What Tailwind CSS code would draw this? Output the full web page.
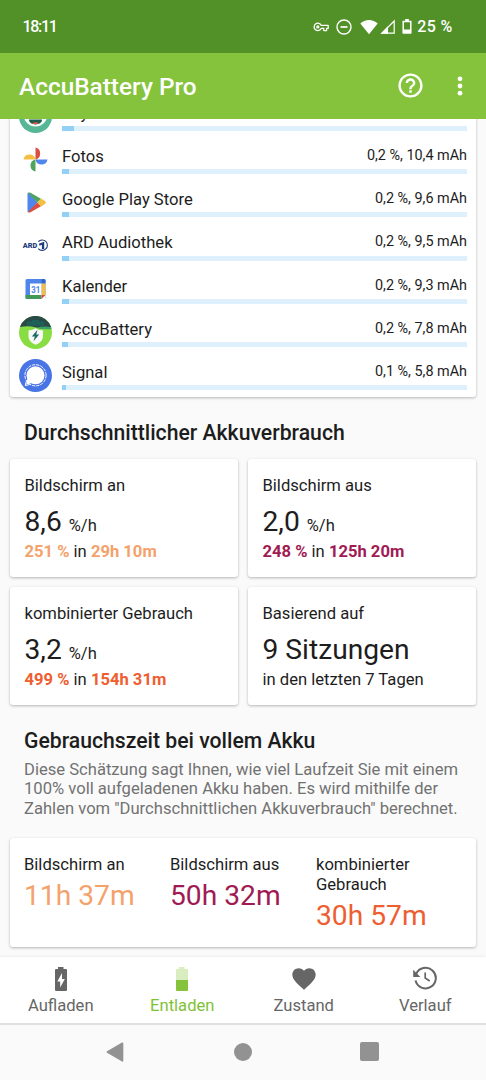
<!DOCTYPE html>
<html lang="de">
<head>
  <meta charset="UTF-8" />
  <meta name="viewport" content="width=device-width, initial-scale=1.0" />
  <title>AccuBattery Pro</title>
  <script src="https://cdn.jsdelivr.net/npm/@tailwindcss/browser@4"></script>
</head>
<body class="w-[486px] h-[1080px] overflow-hidden flex flex-col bg-[#fafafa] text-[#1d1d1d] font-['Roboto',sans-serif] text-[16.6px] leading-[19.4px]">

  <!-- Status bar -->
  <div class="h-[53px] shrink-0 bg-[#529028] text-white flex items-center justify-between pl-[22.5px] pr-[33.5px] text-[16px] font-medium">
    <span class="tracking-[-1.3px] pt-px">18:11</span>
    <div class="flex items-center">
      <svg class="w-4 h-3 mr-[7px]" viewBox="0 0 16 12" fill="none" stroke="#fff" stroke-width="1.3">
        <path d="M8.2 4.4H15.2V7.4H13.6V9.6H10.8V7.4H8.2A3.7 3.7 0 1 1 8.2 4.4Z" stroke-linejoin="round" />
        <circle cx="4.8" cy="5.9" r="1" />
      </svg>
      <svg class="w-4 h-4 mr-2" viewBox="0 0 16 16" fill="none" stroke="#fff" stroke-width="1.4">
        <circle cx="8" cy="8" r="7" /><path d="M4.5 8h7" stroke-width="1.7" />
      </svg>
      <svg class="w-[18px] h-4 mr-[2px]" viewBox="0 0 18 16" fill="#fff">
        <path d="M9 15.2L.3 4.5C2.8 2.3 5.7 1 9 1s6.2 1.3 8.7 3.5Z" />
      </svg>
      <svg class="w-[15px] h-[15px] mr-[7px]" viewBox="0 0 15 15">
        <path d="M2 14.2H14.2V2Z" fill="none" stroke="#fff" stroke-width="1.2" />
        <path d="M.5 14.8L8 7.3V14.8Z" fill="#fff" />
      </svg>
      <svg class="w-[10px] h-[15px] mr-[5px]" viewBox="0 0 10 15">
        <path d="M1.2 2.4H8.8V13.8H1.2Z" fill="none" stroke="#fff" stroke-width="1.5" />
        <path d="M3.2 0H6.8V2H3.2ZM1 10.5H9V14.5H1Z" fill="#fff" />
      </svg>
      <span class="tracking-[0.3px] pt-px">25 %</span>
    </div>
  </div>

  <!-- App bar -->
  <header class="h-[66px] shrink-0 bg-[#85c33d] text-white flex items-center pl-[19px] pr-[23px]">
    <h1 class="flex-1 text-[24.4px] leading-7 font-medium pt-[2px]">AccuBattery Pro</h1>
    <svg class="w-[29px] h-[29px] mr-[32px] -mt-px" viewBox="0 0 24 24" fill="#fff">
      <path d="M11 18h2v-2h-2v2zm1-16C6.48 2 2 6.48 2 12s4.48 10 10 10 10-4.48 10-10S17.52 2 12 2zm0 18c-4.41 0-8-3.59-8-8s3.59-8 8-8 8 3.59 8 8-3.59 8-8 8zm0-14c-2.21 0-4 1.79-4 4h2c0-1.1.9-2 2-2s2 .9 2 2c0 2-3 1.75-3 5h2c0-2.25 3-2.5 3-5 0-2.21-1.79-4-4-4z" />
    </svg>
    <svg class="w-[6px] h-5" viewBox="0 0 6 20" fill="#fff">
      <circle cx="3" cy="2.8" r="2.4" /><circle cx="3" cy="10" r="2.4" /><circle cx="3" cy="17.2" r="2.4" />
    </svg>
  </header>

  <main class="h-[837.5px] shrink-0 overflow-hidden px-[10px]">
    <!-- App usage list, scrolled under the app bar -->
    <ul class="-mt-[31px] h-[309px] bg-white rounded-[3px] shadow-[0_1px_3px_rgba(0,0,0,0.28)] px-[9px]">
      <li class="flex h-[43.15px]">
        <svg class="w-[33px] h-[33px] shrink-0 mt-3" viewBox="0 0 33 33">
          <circle cx="16.5" cy="16.5" r="16.5" fill="#56b696" />
          <circle cx="16.5" cy="14.5" r="12" fill="#f4fbf8" />
          <path d="M10 19.5H23C23 26 10 26 10 19.5Z" fill="#1f5a4c" />
          <path d="M13 23.2Q16.5 21.5 20 23.2Q16.5 25.5 13 23.2Z" fill="#e0574f" />
        </svg>
        <div class="ml-[10px] flex-1 flex flex-col">
          <div class="flex-1 pt-[16px]">Joy</div>
          <div class="h-[5px] bg-[#def0fc]"><div class="h-full w-[12px] bg-[#92d0f6]"></div></div>
        </div>
      </li>
      <li class="flex h-[43.15px]">
        <svg class="w-[33px] h-[33px] shrink-0 mt-3" viewBox="0 0 33 33">
          <path d="M16.5 16.5V4.5A6.2 6.2 0 0 1 16.5 16.5Z" fill="#db4d40" />
          <path d="M16.5 16.5H28.5A6.1 6.1 0 0 1 16.5 16.5Z" fill="#5086ec" />
          <path d="M16.5 16.5V28.5A6.1 6.1 0 0 1 16.5 16.5Z" fill="#4ea45b" />
          <path d="M16.5 16.5H4.5A6.1 6.1 0 0 1 16.5 16.5Z" fill="#f3bf42" />
        </svg>
        <div class="ml-[10px] flex-1 flex flex-col">
          <div class="flex-1 flex justify-between pt-[16px]"><span>Fotos</span><span class="text-[14.4px] leading-[17px]">0,2 %, 10,4 mAh</span></div>
          <div class="h-[5px] bg-[#def0fc]"><div class="h-full w-[7px] bg-[#92d0f6]"></div></div>
        </div>
      </li>
      <li class="flex h-[43.15px]">
        <svg class="w-[33px] h-[33px] shrink-0 mt-3" viewBox="0 0 33 33">
          <path d="M8.5 7.5Q8.5 6.5 10 6.8L18.5 16.5L10 26.2Q8.5 26.5 8.5 25.5Z" fill="#4f86ec" />
          <path d="M9 7Q10 6 11.5 6.8L22 12.7L18.3 16.5Z" fill="#4ea45b" />
          <path d="M9 26Q10 27 11.5 26.2L22 20.3L18.3 16.5Z" fill="#db4d40" />
          <path d="M22 12.6L26 15Q27.8 16.5 26 18L22 20.4L18.3 16.5Z" fill="#f3bf42" />
        </svg>
        <div class="ml-[10px] flex-1 flex flex-col">
          <div class="flex-1 flex justify-between pt-[16px]"><span>Google Play Store</span><span class="text-[14.4px] leading-[17px]">0,2 %, 9,6 mAh</span></div>
          <div class="h-[5px] bg-[#def0fc]"><div class="h-full w-[6.5px] bg-[#92d0f6]"></div></div>
        </div>
      </li>
      <li class="flex h-[43.15px]">
        <svg class="w-[33px] h-[33px] shrink-0 mt-3" viewBox="0 0 33 33">
          <text x="3.8" y="19.2" font-family="Roboto, sans-serif" font-size="7.5" font-weight="900" textLength="14.5" lengthAdjust="spacingAndGlyphs" fill="#1d3c7c">ARD</text>
          <path d="M19.3 12.7A5.2 5.2 0 1 1 19.3 19.6" fill="none" stroke="#1d3c7c" stroke-width="1.1" />
          <path d="M19.8 14.8L25.2 12.8V20H22.9V15.8L20.6 16.7Z" fill="#1d3c7c" />
        </svg>
        <div class="ml-[10px] flex-1 flex flex-col">
          <div class="flex-1 flex justify-between pt-[16px]"><span>ARD Audiothek</span><span class="text-[14.4px] leading-[17px]">0,2 %, 9,5 mAh</span></div>
          <div class="h-[5px] bg-[#def0fc]"><div class="h-full w-[6.5px] bg-[#92d0f6]"></div></div>
        </div>
      </li>
      <li class="flex h-[43.15px]">
        <svg class="w-[33px] h-[33px] shrink-0 mt-3" viewBox="0 0 33 33">
          <rect x="6.5" y="6" width="20" height="20" rx="1.5" fill="#4f86ec" />
          <path d="M22.5 6H25Q26.5 6 26.5 7.5V10.500H22.5Z" fill="#2f66cf" />
          <path d="M22.5 10.5H26.5V22H22.5Z" fill="#f3bf42" />
          <path d="M6.5 22H22.5V26H8Q6.5 26 6.5 24.5Z" fill="#43985a" />
          <path d="M22.5 22H26.5V26H22.5Z" fill="#fff" />
          <path d="M22.5 22H26.5L22.5 26Z" fill="#db4d40" />
          <rect x="11" y="10.5" width="11.5" height="11.5" fill="#fff" />
          <text x="16.8" y="19.6" text-anchor="middle" font-family="Roboto, sans-serif" font-size="9" font-weight="700" textLength="9" lengthAdjust="spacingAndGlyphs" fill="#4f86ec">31</text>
        </svg>
        <div class="ml-[10px] flex-1 flex flex-col">
          <div class="flex-1 flex justify-between pt-[16px]"><span>Kalender</span><span class="text-[14.4px] leading-[17px]">0,2 %, 9,3 mAh</span></div>
          <div class="h-[5px] bg-[#def0fc]"><div class="h-full w-[6.5px] bg-[#92d0f6]"></div></div>
        </div>
      </li>
      <li class="flex h-[43.15px]">
        <svg class="w-[33px] h-[33px] shrink-0 mt-3" viewBox="0 0 33 33">
          <circle cx="16.5" cy="16.5" r="16.5" fill="#88dd42" />
          <path d="M.9 11A16.5 16.5 0 0 1 32.1 11Q24 13.5 17 11.5T.9 11Z" fill="#2a4a4a" />
          <path d="M13 4H20V5.5H25V9.500H8V5.5H13Z" fill="#1c6058" />
          <path d="M17 11.7Q26 9.5 32.2 11.3L32.6 13Q25 14 17 11.7Z" fill="#3aa06a" />
          <path d="M9.5 14.5Q14 14 16.5 12.2Q19 14 24 14.5V20Q24 26 16.7 28.8Q9.5 26 9.5 20Z" fill="#f7f9f8" />
          <path d="M18.5 13.8L12.8 20.5H15.8L14.5 25.3L20.2 18.5H17.3Z" fill="#1f6b62" />
        </svg>
        <div class="ml-[10px] flex-1 flex flex-col">
          <div class="flex-1 flex justify-between pt-[16px]"><span>AccuBattery</span><span class="text-[14.4px] leading-[17px]">0,2 %, 7,8 mAh</span></div>
          <div class="h-[5px] bg-[#def0fc]"><div class="h-full w-[5.5px] bg-[#92d0f6]"></div></div>
        </div>
      </li>
      <li class="flex h-[43.15px]">
        <svg class="w-[33px] h-[33px] shrink-0 mt-3" viewBox="0 0 33 33">
          <circle cx="16.5" cy="16.5" r="16.5" fill="#4974e6" />
          <circle cx="16.5" cy="16.3" r="9" fill="#fff" />
          <path d="M8.5 19.5L7.3 25.5L13 24Z" fill="#fff" />
          <circle cx="16.5" cy="16.3" r="10.6" fill="none" stroke="#fff" stroke-width="1" stroke-dasharray="3.2 1" />
          <path d="M7.3 22.2L6.3 26.6L10.7 25.5" fill="none" stroke="#fff" stroke-width="1" />
        </svg>
        <div class="ml-[10px] flex-1 flex flex-col">
          <div class="flex-1 flex justify-between pt-[16px]"><span>Signal</span><span class="text-[14.4px] leading-[17px]">0,1 %, 5,8 mAh</span></div>
          <div class="h-[5px] bg-[#def0fc]"><div class="h-full w-[4px] bg-[#92d0f6]"></div></div>
        </div>
      </li>
    </ul>

    <!-- Average usage -->
    <h2 class="mt-[22.5px] ml-[14px] text-[21.2px] leading-[25px] font-medium">Durchschnittlicher Akkuverbrauch</h2>
    <div class="mt-[14.5px] grid grid-cols-2 gap-[10px]">
      <section class="h-[118px] bg-white rounded-[3px] shadow-[0_1px_3px_rgba(0,0,0,0.28)] px-[14.5px] pt-[17px]">
        <p>Bildschirm an</p>
        <p class="mt-[10px] text-[28.2px] leading-[34px]">8,6 <span class="text-[16.5px] leading-none">%/h</span></p>
        <p class="mt-[3px]"><b class="font-bold text-[#f4a26c]">251 %</b> in <b class="font-bold text-[#f4a26c]">29h 10m</b></p>
      </section>
      <section class="h-[118px] bg-white rounded-[3px] shadow-[0_1px_3px_rgba(0,0,0,0.28)] px-[14.5px] pt-[17px]">
        <p>Bildschirm aus</p>
        <p class="mt-[10px] text-[28.2px] leading-[34px]">2,0 <span class="text-[16.5px] leading-none">%/h</span></p>
        <p class="mt-[3px]"><b class="font-bold text-[#a01b53]">248 %</b> in <b class="font-bold text-[#a01b53]">125h 20m</b></p>
      </section>
      <section class="h-[118px] bg-white rounded-[3px] shadow-[0_1px_3px_rgba(0,0,0,0.28)] px-[14.5px] pt-[17px]">
        <p>kombinierter Gebrauch</p>
        <p class="mt-[10px] text-[28.2px] leading-[34px]">3,2 <span class="text-[16.5px] leading-none">%/h</span></p>
        <p class="mt-[3px]"><b class="font-bold text-[#ee5e31]">499 %</b> in <b class="font-bold text-[#ee5e31]">154h 31m</b></p>
      </section>
      <section class="h-[118px] bg-white rounded-[3px] shadow-[0_1px_3px_rgba(0,0,0,0.28)] px-[14.5px] pt-[17px]">
        <p>Basierend auf</p>
        <p class="mt-[10px] text-[28.2px] leading-[34px]">9 Sitzungen</p>
        <p class="mt-[3px]">in den letzten 7 Tagen</p>
      </section>
    </div>

    <!-- Full charge estimate -->
    <h2 class="mt-[22.5px] ml-[14px] text-[21.2px] leading-[25px] font-medium">Gebrauchszeit bei vollem Akku</h2>
    <p class="mt-[7.5px] ml-[14px] text-[#727272] whitespace-nowrap">Diese Schätzung sagt Ihnen, wie viel Laufzeit Sie mit einem<br />100% voll aufgeladenen Akku haben. Es wird mithilfe der<br />Zahlen vom "Durchschnittlichen Akkuverbrauch" berechnet.</p>
    <section class="mt-[19.5px] h-[109.5px] bg-white rounded-[3px] shadow-[0_1px_3px_rgba(0,0,0,0.28)] px-[14px] pt-[17.5px] grid grid-cols-3">
      <div>
        <p>Bildschirm an</p>
        <p class="mt-[4.5px] text-[28.2px] leading-[34px] text-[#f4a26c]">11h 37m</p>
      </div>
      <div>
        <p>Bildschirm aus</p>
        <p class="mt-[4.5px] text-[28.2px] leading-[34px] text-[#a01b53]">50h 32m</p>
      </div>
      <div>
        <p>kombinierter<br />Gebrauch</p>
        <p class="mt-[4.5px] text-[28.2px] leading-[34px] text-[#ee5e31]">30h 57m</p>
      </div>
    </section>
  </main>

  <!-- Tabs -->
  <nav class="h-[68.5px] shrink-0 grid grid-cols-4 bg-white text-[#666] border-b-2 border-[#e0e0e0] shadow-[0_-1px_3px_rgba(0,0,0,0.06)]">
    <a class="flex flex-col items-center pt-[9px]">
      <svg class="w-[26px] h-[26px]" viewBox="0 0 26 26">
        <path d="M10 1H15.500V3H18Q19 3 19 4V24Q19 25 18 25H8Q7 25 7 24V4Q7 3 8 3H10Z" fill="#666" />
        <path d="M14 7L9.3 15.5H12.2V21.5L16.8 13H14Z" fill="#fff" />
      </svg>
      <span class="mt-[4px]">Aufladen</span>
    </a>
    <a class="flex flex-col items-center pt-[9px] text-[#7fc236]">
      <svg class="w-[26px] h-[26px]" viewBox="0 0 26 26">
        <path d="M10 1H15.500V3H18Q19 3 19 4V14H7V4Q7 3 8 3H10Z" fill="#d9edc1" />
        <path d="M7 14H19V24Q19 25 18 25H8Q7 25 7 24Z" fill="#85c33d" />
      </svg>
      <span class="mt-[4px]">Entladen</span>
    </a>
    <a class="flex flex-col items-center pt-[9px]">
      <svg class="w-[28px] h-[26px]" viewBox="0 0 24 22.3" fill="#666">
        <path d="M12 20.35l-1.45-1.32C5.4 14.36 2 11.28 2 7.5 2 4.42 4.42 2 7.5 2c1.74 0 3.41.81 4.5 2.09C13.09 2.81 14.76 2 16.5 2 19.58 2 22 4.42 22 7.5c0 3.78-3.4 6.86-8.55 11.54L12 20.35z" />
      </svg>
      <span class="mt-[4px]">Zustand</span>
    </a>
    <a class="flex flex-col items-center pt-[9px]">
      <svg class="w-[26px] h-[26px]" viewBox="0 0 26 26" fill="none" stroke="#666" stroke-width="2">
        <path d="M4.2 7.7A10.3 10.3 0 1 1 3.5 14.5" />
        <path d="M1.2 3.8V11H8.4Z" fill="#666" stroke="none" />
        <path d="M13.2 6.5V12L17.7 15" stroke-width="1.7" />
      </svg>
      <span class="mt-[4px]">Verlauf</span>
    </a>
  </nav>

  <!-- System navigation -->
  <div class="flex-1 flex items-center justify-between pl-[106px] pr-[107.5px] pb-[2px] bg-[#fafafa]">
    <svg class="w-[18px] h-5" viewBox="0 0 18 20" fill="#929292"><path d="M1 9.2Q0 10 1 10.8L16 19.5Q17.3 20 17.3 18.5V1.5Q17.3 0 16 .5Z" /></svg>
    <div class="w-[18px] h-[18px] rounded-full bg-[#929292] ml-[2px]"></div>
    <div class="w-[18.5px] h-[18.5px] rounded-[2px] bg-[#929292]"></div>
  </div>
</body>
</html>
